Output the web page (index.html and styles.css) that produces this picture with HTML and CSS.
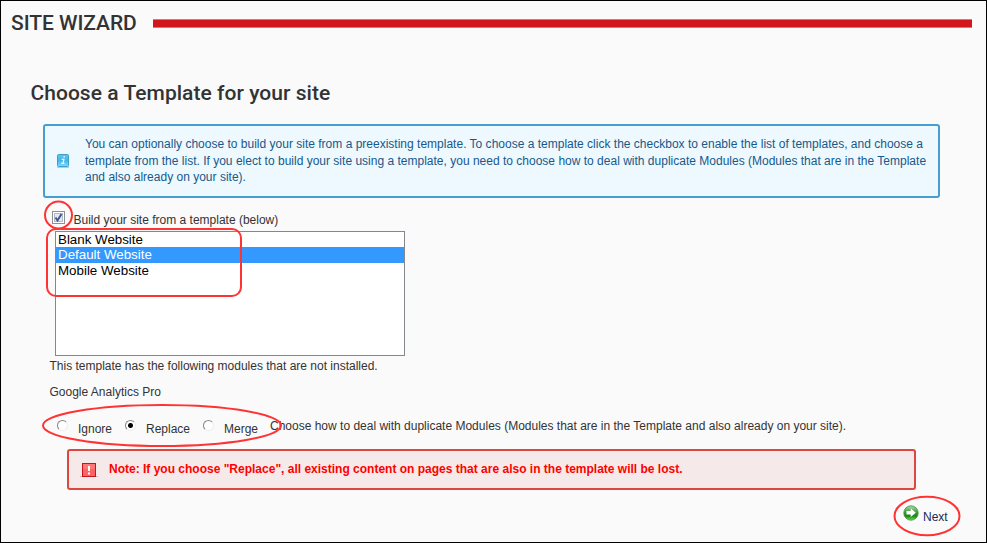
FILE: index.html
```
<!DOCTYPE html>
<html lang="en">
<head>
<meta charset="utf-8">
<title>Site Wizard</title>
<link rel="stylesheet" href="styles.css">
</head>
<body>
<main class="wizard">
  <header class="titlebar">
    <h1><span>SITE WIZARD</span></h1>
    <div class="rule"></div>
  </header>
  <h2>Choose a Template for your site</h2>
  <section class="info">
    <svg width="14" height="16" viewBox="0 0 14 16">
      <defs><linearGradient id="blue" x2="0" y2="1"><stop offset="0" stop-color="#63c4ed"/><stop offset=".5" stop-color="#45b5e8"/><stop offset="1" stop-color="#7cdcff"/></linearGradient></defs>
      <path d="M1 14.5h12" stroke="#b9cbd3"/>
      <rect x="1.5" y="1.5" width="11" height="12" rx="1" fill="url(#blue)" stroke="#3e9fcb"/>
      <path d="M7.4 3.9h1.6M5.7 6.3h2.2l-.9 4M5.2 10.4h3.2" stroke="#e8f8ff" stroke-width="1.3" fill="none"/>
    </svg>
    <p>You can optionally choose to build your site from a preexisting template. To choose a template click the checkbox to enable the list of templates, and choose a<br>template from the list. If you elect to build your site using a template, you need to choose how to deal with duplicate Modules (Modules that are in the Template<br>and also already on your site).</p>
  </section>
  <label class="check">
    <svg width="13" height="13" viewBox="0 0 13 13">
      <rect x=".5" y=".5" width="12" height="12" fill="#fff" stroke="#8e8f8f"/>
      <rect x="2.5" y="2.5" width="8" height="8" fill="#e4e8ed" stroke="#b4bbc5"/>
      <path d="M3.5 6.5l2 3L9.5 3" fill="none" stroke="#40569a" stroke-width="2"/>
    </svg>
    <span>Build your site from a template (below)</span>
  </label>
  <ul class="list">
    <li>Blank Website</li>
    <li class="selected">Default Website</li>
    <li>Mobile Website</li>
  </ul>
  <p class="missing">This template has the following modules that are not installed.</p>
  <p class="module">Google Analytics Pro</p>
  <div class="modes">
    <div class="mode"><i class="radio"></i><span>Ignore</span></div>
    <div class="mode wide"><i class="radio on"></i><span>Replace</span></div>
    <div class="mode"><i class="radio"></i><span>Merge</span></div>
    <p>Choose how to deal with duplicate Modules (Modules that are in the Template and also already on your site).</p>
  </div>
  <section class="warning">
    <svg width="18" height="16" viewBox="0 0 18 16">
      <path d="M0 14.5h18" stroke="#cbbcbc"/>
      <rect x="2.5" y="1.5" width="13" height="13" fill="#ff6262" stroke="#c5161b"/>
      <path d="M3 2h12v5H3z" fill="#ff7777"/>
      <path d="M9 4v5M9 10.5v2" stroke="#fff" stroke-width="2"/>
    </svg>
    <strong>Note: If you choose "Replace", all existing content on pages that are also in the template will be lost.</strong>
  </section>
  <div class="next">
    <svg width="16" height="16" viewBox="0 0 16 16">
      <defs><linearGradient id="green" x2="0" y2="1"><stop offset="0" stop-color="#b9d8b4"/><stop offset=".4" stop-color="#46a33d"/><stop offset=".7" stop-color="#178417"/><stop offset="1" stop-color="#6ee34c"/></linearGradient></defs>
      <circle cx="8" cy="8" r="7.2" fill="url(#green)" stroke="#398f33" stroke-width=".8"/>
      <path d="M3.5 6h4.2V3.3L12.8 7.7 7.7 12V9.4H3.5z" fill="#fff"/>
    </svg>
    <span>Next</span>
  </div>
  <svg class="marks" width="987" height="543" viewBox="0 0 987 543">
    <ellipse cx="58.5" cy="215" rx="13.5" ry="13.5"/>
    <rect x="47" y="229" width="194" height="67" rx="9"/>
    <ellipse cx="162" cy="425.5" rx="119" ry="20.5"/>
    <ellipse cx="927" cy="516" rx="32.5" ry="19.2"/>
  </svg>
</main>
</body>
</html>
```
FILE: styles.css
```
* { box-sizing: border-box; }
body { margin: 0; font: 12px/16px "Liberation Sans", Arial, sans-serif; color: #333; background: #fafafa; }
h1, h2, p, ul { margin: 0; padding: 0; }
svg { display: block; flex: none; }
.wizard { position: relative; width: 987px; height: 543px; border: 1px solid #000; overflow: hidden; white-space: nowrap; }
.titlebar { display: flex; align-items: center; height: 45px; padding: 0 14px 0 10px; }
h1, h2 { font-family: Roboto, "Open Sans", sans-serif; font-weight: 500; }
h1 { width: 142px; padding-bottom: 2px; font-size: 21px; line-height: 26px; letter-spacing: -.05px; }
.rule { flex: 1; height: 9px; background: #d2161b; border: solid #dc7679; border-width: 1px 0; }
h2 { margin: 33px 0 0 29.5px; font-size: 21px; line-height: 28px; letter-spacing: .04px; }
.info { display: flex; align-items: center; width: 897px; height: 74px; margin: 17px 0 0 42px; padding: 0 11px; border: 2px solid #459fd0; border-radius: 3px; background: #edf8ff; color: #17598a; line-height: 16.5px; }
.info p { margin-left: 15px; letter-spacing: .005px; }
.check { display: flex; height: 33px; padding: 13px 0 0 51px; }
.check span { margin: 1px 0 0 8.5px; }
.list { width: 350px; height: 125px; margin-left: 54px; border: 1px solid #828790; background: #fff; color: #000; list-style: none; font-size: 13.33px; line-height: 16px; }
.list li { height: 16px; padding-left: 2px; }
.list li:first-child { height: 15px; line-height: 15px; }
.list .selected { background: #3399ff; color: #fff; line-height: 15px; }
.missing { margin: 2px 0 0 48.5px; }
.module { margin: 10px 0 0 48.5px; }
.modes { display: flex; margin: 18px 0 0 56px; height: 32px; }
.mode { display: flex; width: 68px; }
.mode.wide { width: 78px; }
.mode span { margin: 3px 0 0 10px; }
.modes p { margin-left: -1px; }
.radio { flex: none; width: 11px; height: 11px; margin-top: 2px; border-radius: 50%; border: 1px solid #858585; border-right-color: #eee; border-bottom-color: #eee; background: #fff; }
.radio.on { background: radial-gradient(circle, #000 0 2px, #fff 3px); }
.warning { display: flex; align-items: center; width: 849px; height: 41px; margin: -1px 0 0 66px; padding: 0 11px; border: 2px solid #db4840; border-radius: 3px; background: #f6e9e9; color: #f00; }
.warning strong { margin: -2px 0 0 11px; }
.next { display: flex; margin: 15px 0 0 902px; }
.next span { margin: 4px 0 0 4px; color: #172b58; }
.marks { position: absolute; left: -1px; top: -1px; fill: none; stroke: #f33; stroke-width: 2px; }
```
